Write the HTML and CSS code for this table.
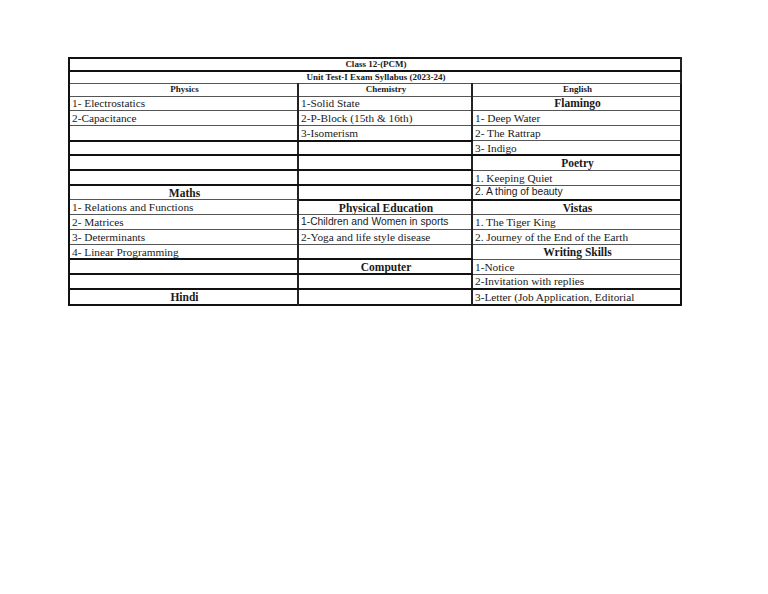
FILE: index.html
```html
<!DOCTYPE html>
<html>
<head>
<meta charset="utf-8">
<link rel="stylesheet" href="styles.css">
</head>
<body>
<div class="page">
<table class="sheet">
<colgroup><col class="c1"><col class="c2"><col class="c3"></colgroup>
<tr class="r-title"><td colspan="3" class="small-h tb">Class 12-(PCM)</td></tr>
<tr class="r-title"><td colspan="3" class="small-h">Unit Test-I Exam Syllabus (2023-24)</td></tr>
<tr class="r-head"><td class="small-h">Physics</td><td class="small-h">Chemistry</td><td class="small-h">English</td></tr>
<tr><td>1- Electrostatics</td><td>1-Solid State</td><td class="hd">Flamingo</td></tr>
<tr><td>2-Capacitance</td><td>2-P-Block (15th &amp; 16th)</td><td>1- Deep Water</td></tr>
<tr><td class="tb"></td><td class="tb">3-Isomerism</td><td>2- The Rattrap</td></tr>
<tr><td class="tb"></td><td class="tb"></td><td class="tb">3- Indigo</td></tr>
<tr><td class="tb"></td><td class="tb"></td><td class="hd">Poetry</td></tr>
<tr><td class="tb"></td><td class="tb"></td><td>1. Keeping Quiet</td></tr>
<tr><td class="hd">Maths</td><td class="tb"></td><td class="sans tb">2. A thing of beauty</td></tr>
<tr><td>1- Relations and Functions</td><td class="hd">Physical Education</td><td class="hd">Vistas</td></tr>
<tr><td>2- Matrices</td><td class="sans">1-Children and Women in sports</td><td>1. The Tiger King</td></tr>
<tr><td>3- Determinants</td><td>2-Yoga and life style disease</td><td>2. Journey of the End of the Earth</td></tr>
<tr><td class="tb">4- Linear Programming</td><td class="tb"></td><td class="hd">Writing Skills</td></tr>
<tr><td class="tb"></td><td class="hd tb">Computer</td><td>1-Notice</td></tr>
<tr><td class="tb"></td><td class="tb"></td><td>2-Invitation with replies</td></tr>
<tr class="r-last"><td class="hd">Hindi</td><td></td><td>3-Letter (Job Application, Editorial</td></tr>
</table>
</div>
</body>
</html>
```
FILE: styles.css
```css
html, body {
  margin: 0;
  padding: 0;
  background: #ffffff;
}
.page {
  padding: 57px 0 0 68px;
}
.sheet {
  border-collapse: collapse;
  table-layout: fixed;
  width: 612px;
  border: 2px solid #111;
  font-family: "Liberation Serif", "Times New Roman", serif;
  font-size: 11.3px;
  color: #1a1a1a;
}
.c1 { width: 229px; }
.c2 { width: 174px; }
.c3 { width: 209px; }
.sheet tr { height: 14.85px; }
.sheet td {
  border: 1px solid #555;
  padding: 0 0 0 2px;
  line-height: 12px;
  vertical-align: middle;
  white-space: nowrap;
  overflow: hidden;
}
.sheet td:nth-child(1), .sheet td:nth-child(2) {
  border-right: 2px solid #222;
}
.sheet tr.r-title { height: 12.5px; }
.sheet tr.r-head { height: 13px; }
.sheet .r-title td, .sheet .r-head td { line-height: 10px; vertical-align: top; }
.sheet td.tb { border-bottom: 2px solid #111; }
.sheet .r-last td { border-top: 2px solid #111; }
.sheet tr.r-last { height: 16px; }
.small-h {
  font-weight: bold;
  font-size: 9px;
  text-align: center;
}
.hd {
  font-weight: bold;
  font-size: 11.5px;
  text-align: center;
}
.sans {
  font-family: "Liberation Sans", Arial, sans-serif;
  font-size: 10.3px;
}
```
